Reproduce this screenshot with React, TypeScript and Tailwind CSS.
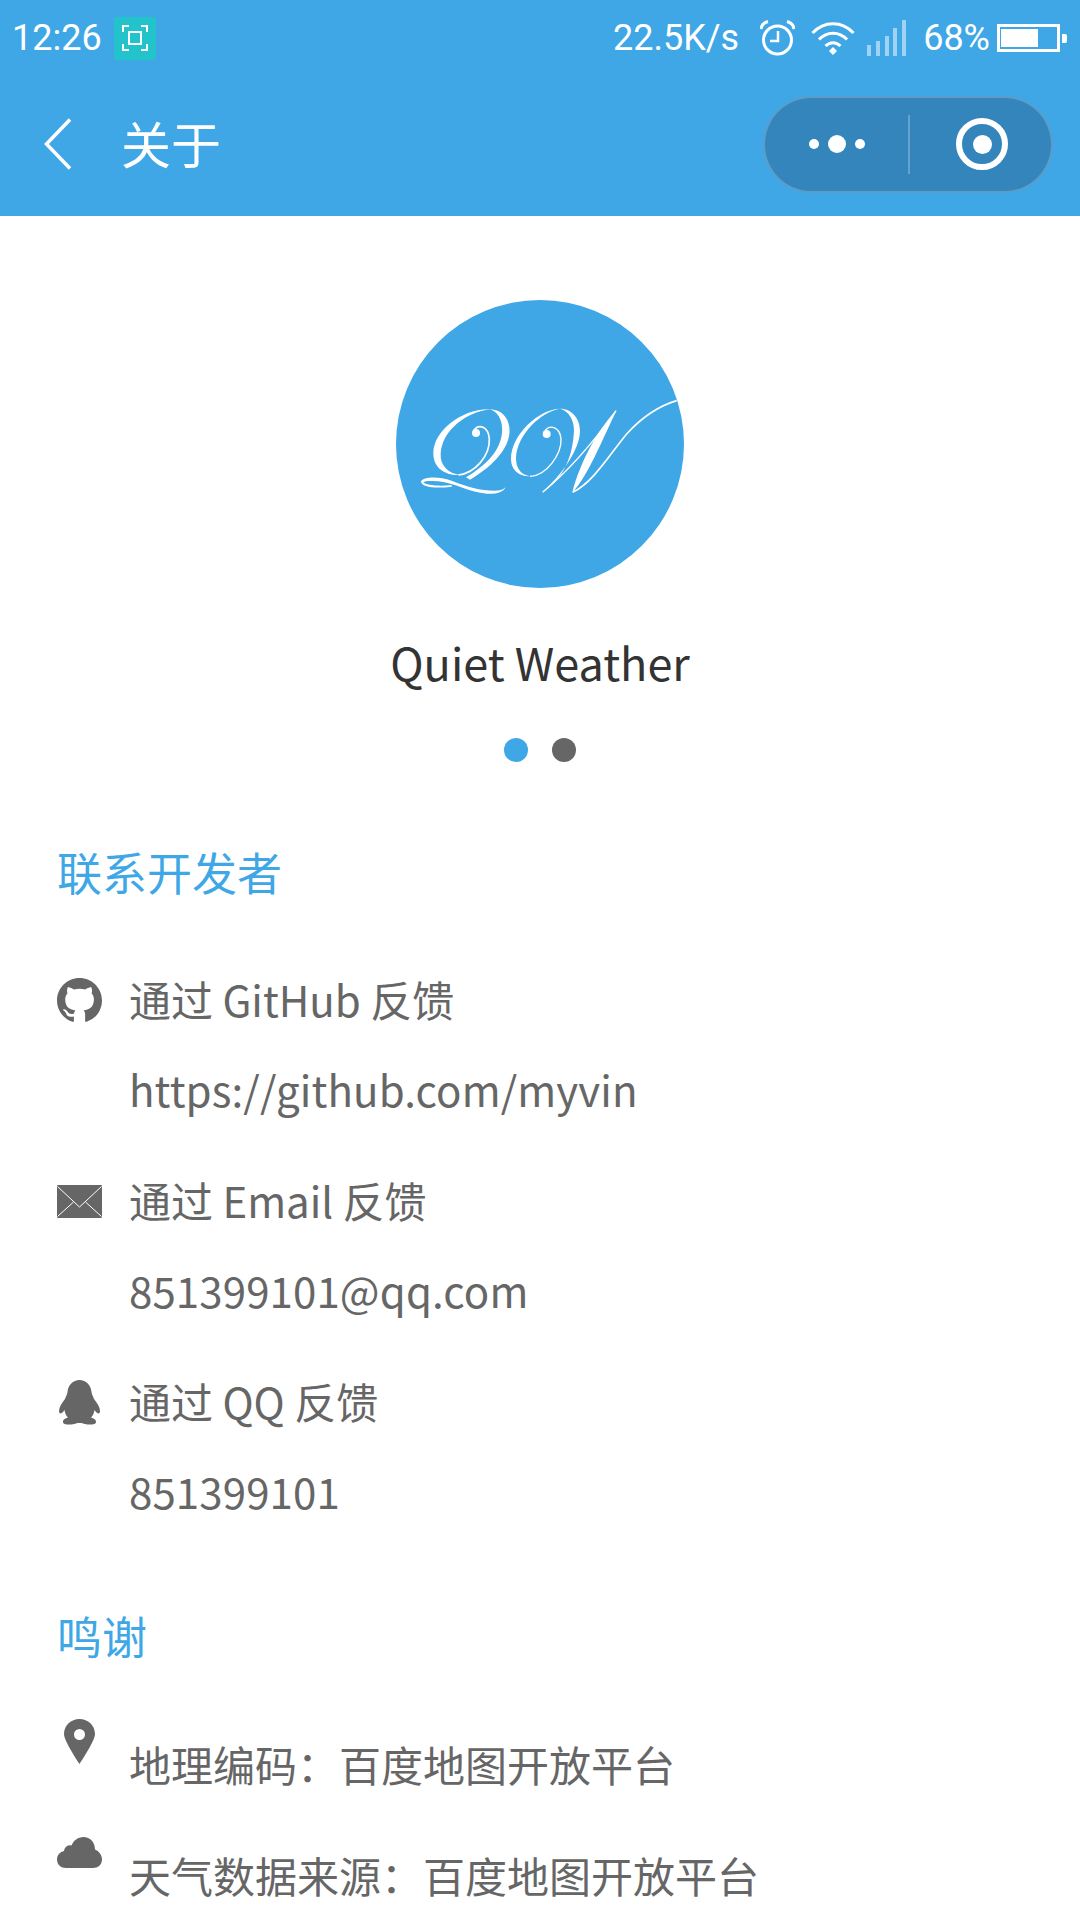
const CJK = "font-['Noto_Sans_CJK_SC','Noto_Sans',sans-serif]";

const QwLogo = () => (
  <svg viewBox="48 28 864 864" className="h-[288px] w-[288px]">
    <circle cx="480" cy="460" r="432" fill="#40a7e7" />
    <g fill="#fff">
      {/* Q */}
      <path d="M335 356C250 350 158 420 160 490C161 532 195 555 240 553C205 548 180 525 182 490C185 420 260 362 335 356Z" />
      <path d="M330 356C375 358 392 395 388 430C382 482 330 532 270 567L258 560C318 525 362 480 366 425C369 390 355 365 330 356Z" />
      <circle cx="288" cy="427" r="12" />
      <path d="M123 572C130 558 175 556 215 570C260 588 300 600 345 600C360 600 372 596 377 589C370 606 345 611 320 609C270 606 225 577 175 572C150 570 136 570 130 575C137 584 180 588 215 583L215 588C170 594 123 591 123 572Z" />
      {/* W */}
      <circle cx="500" cy="430" r="12" />
      <path d="M540 354C480 354 393 430 393 505C393 537 415 558 450 557C420 552 407 530 408 500C412 430 485 362 540 354Z" />
      <path d="M540 354C577 354 600 385 600 420C600 475 545 555 484 606C550 565 578 500 582 420C582 385 565 360 540 354Z" />
      <path d="M710 359C665 400 600 510 577 606C625 555 665 450 710 359Z" />
    </g>
    <g fill="none" stroke="#fff">
      <path d="M282 418C295 400 325 405 328 445C330 495 285 548 235 553" strokeWidth="5" />
      <path d="M495 420C510 400 540 410 543 445C545 490 500 555 450 557" strokeWidth="4" />
      <path d="M488 605C560 545 630 470 708 360" strokeWidth="4" />
      <path d="M578 605C640 575 690 490 740 430C790 375 840 345 890 330" strokeWidth="5" />
    </g>
  </svg>
);

const GithubIcon = () => (
  <svg viewBox="0 0 16 16" className="h-[45px] w-[45px]" fill="#666">
    <path d="M8 0C3.58 0 0 3.58 0 8c0 3.54 2.29 6.53 5.47 7.59.4.07.55-.17.55-.38 0-.19-.01-.82-.01-1.49-2.01.37-2.53-.49-2.69-.94-.09-.23-.48-.94-.82-1.13-.28-.15-.68-.52-.01-.53.63-.01 1.08.58 1.23.82.72 1.21 1.87.87 2.33.66.07-.52.28-.87.51-1.07-1.78-.2-3.64-.89-3.64-3.95 0-.87.31-1.59.82-2.15-.08-.2-.36-1.02.08-2.12 0 0 .67-.21 2.2.82.64-.18 1.32-.27 2-.27.68 0 1.36.09 2 .27 1.53-1.04 2.2-.82 2.2-.82.44 1.1.16 1.92.08 2.12.51.56.82 1.27.82 2.15 0 3.07-1.87 3.75-3.65 3.95.29.25.54.73.54 1.48 0 1.07-.01 1.93-.01 2.2 0 .21.15.46.55.38A8.013 8.013 0 0016 8c0-4.42-3.58-8-8-8z" />
  </svg>
);

const MailIcon = () => (
  <svg viewBox="0 0 45 33" className="h-[33px] w-[45px]">
    <rect width="45" height="33" rx="1" fill="#666" />
    <path d="M0.5 1.5L22.5 22L44.5 1.5M0.5 31.5L16.5 17M44.5 31.5L28.5 17" fill="none" stroke="#fff" strokeWidth="1" />
  </svg>
);

const PenguinIcon = () => (
  <svg viewBox="0 0 41 45" className="h-[45px] w-[41px]" fill="#666">
    <path d="M20.5 0C27 0 32 5 32.5 12C33 15 34 16 35 19C38 23 41 27 41 31C41 34 39 34 37 32L35.5 30C35 33 34 36 32 37.5C36 39 37 40 37 42C37 45 30 45 26 44C24 43.5 23 43 20.5 43C18 43 17 43.5 15 44C11 45 4 45 4 42C4 40 5 39 9 37.5C7 36 6 33 5.5 30L4 32C2 34 0 34 0 31C0 27 3 23 6 19C7 16 8 15 8.5 12C9 5 14 0 20.5 0Z" />
  </svg>
);

const PinIcon = () => (
  <svg viewBox="0 0 31 45" className="h-[45px] w-[31px]">
    <path fillRule="evenodd" fill="#666" d="M15.5 0C24 0 31 6.5 31 15C31 21 20 38 15.5 45C11 38 0 21 0 15C0 6.5 7 0 15.5 0ZM15.5 10A5.5 5.5 0 1 0 15.5 21A5.5 5.5 0 1 0 15.5 10Z" />
  </svg>
);

const CloudIcon = () => (
  <svg viewBox="0 0 45 31" className="h-[31px] w-[45px]" fill="#666">
    <path d="M9 31C4 31 0 27.5 0 22.5C0 18 3 15 7 14C7.500 10 11 7.500 14.500 8.500C16.500 3.500 21 0 26.500 0C33 0 38 5 38 12.500C42 14 45 18 45 22.500C45 27.500 41 31 36 31Z" />
  </svg>
);

const AlarmIcon = () => (
  <svg viewBox="0 0 35 36" className="h-[36px] w-[35px]" fill="none" stroke="#fff" strokeWidth="3">
    <circle cx="17.500" cy="20" r="14" />
    <path d="M18 11V21H10" strokeWidth="2.500" />
    <path d="M1 9C1.500 5 4 2.500 8 1.500M34 9C33.500 5 31 2.500 27 1.500" />
  </svg>
);

const WifiIcon = () => (
  <svg viewBox="0 0 44 34" className="h-[34px] w-[44px]" fill="none" stroke="#fff" strokeWidth="3">
    <path d="M1.500 12C13 -0.500 31 -0.500 42.500 12" />
    <path d="M8 18.500C16 10 28 10 36 18.500" />
    <path d="M14.500 25C19 20.500 25 20.500 29.500 25" />
    <path d="M18 30L22 26L26 30L22 34Z" fill="#fff" stroke="none" />
  </svg>
);

const SignalIcon = () => (
  <div className="flex h-[36px] w-[39px] items-end justify-between opacity-50">
    {[11, 15, 20, 28, 36].map((h) => (
      <div key={h} className="w-[4px] bg-white" style={{ height: h }} />
    ))}
  </div>
);

const BatteryIcon = () => (
  <div className="flex items-center">
    <div className="flex h-[28px] w-[63px] items-center border-[3px] border-white px-[1px]">
      <div className="h-[18px] w-[37px] bg-white" />
    </div>
    <div className="ml-[2px] h-[9px] w-[5px] rounded-r-[2px] bg-white" />
  </div>
);

const ContactRow = ({ icon, label, value }: { icon: React.ReactNode; label: string; value: string }) => (
  <div className="mb-[19px]">
    <div className="flex h-[91px] items-center">
      <div className="flex w-[74px] justify-start pt-[5px]">{icon}</div>
      <p className="-ml-[2px] pt-[2px]">{label}</p>
    </div>
    <p className="h-[91px] pl-[72px] tracking-[0.12px]">{value}</p>
  </div>
);

export default function App() {
  return (
    <div className={`h-[1920px] w-[1080px] overflow-hidden bg-white ${CJK}`}>
      <header className="h-[216px] bg-[#40a7e7] text-white">
        <div className="flex h-[76px] items-center justify-between pl-[12px] pr-[13px] font-['Roboto',sans-serif] text-[36px]">
          <div className="flex items-center gap-[12px]">
            <span>12:26</span>
            <span className="flex h-[43px] w-[42px] items-center justify-center rounded-[4px] bg-[#22c3ca]">
              <svg viewBox="0 0 26 26" className="h-[26px] w-[26px]" fill="none" stroke="#fff" strokeWidth="2">
                <path d="M1 7V1H7M19 1H25V7M1 19V25H7M19 25H25V19" />
                <rect x="7" y="7" width="12" height="12" />
              </svg>
            </span>
          </div>
          <div className="flex items-center">
            <span>22.5K/s</span>
            <span className="ml-[21px]"><AlarmIcon /></span>
            <span className="ml-[16px]"><WifiIcon /></span>
            <span className="ml-[12px]"><SignalIcon /></span>
            <span className="ml-[17px]">68%</span>
            <span className="ml-[7px]"><BatteryIcon /></span>
          </div>
        </div>
        <div className="flex h-[136px] items-center justify-between pl-[44px] pr-[27px]">
          <div className="flex items-center">
            <svg viewBox="0 0 28 52" className="h-[52px] w-[28px]" fill="none" stroke="#fff" strokeWidth="3.500">
              <path d="M26 1.500L2.500 26L26 50.500" />
            </svg>
            <span className="mb-[4px] ml-[49px] text-[50px] leading-none">关于</span>
          </div>
          <div className="flex h-[97px] w-[290px] items-center rounded-full border-2 border-white/20 bg-[#3385bb]">
            <div className="flex w-[143px] shrink-0 items-center justify-center gap-[9px]">
              <span className="h-[10px] w-[10px] rounded-full bg-white" />
              <span className="h-[18px] w-[18px] rounded-full bg-white" />
              <span className="h-[10px] w-[10px] rounded-full bg-white" />
            </div>
            <div className="h-[59px] w-[2px] bg-white/25" />
            <div className="flex flex-1 items-center justify-center pl-[3px]">
              <span className="flex h-[52px] w-[52px] items-center justify-center rounded-full border-[6px] border-white">
                <span className="h-[19px] w-[19px] rounded-full bg-white" />
              </span>
            </div>
          </div>
        </div>
      </header>

      <main>
        <div className="flex flex-col items-center pt-[84px]">
          <QwLogo />
          <p className="mt-[43px] text-[45px] leading-[62px] text-[#333]">Quiet Weather</p>
          <div className="mt-[45px] flex gap-[24px]">
            <span className="h-[24px] w-[24px] rounded-full bg-[#40a7e7]" />
            <span className="h-[24px] w-[24px] rounded-full bg-[#666]" />
          </div>
        </div>

        <section className="px-[57px] text-[42px] leading-[91px] text-[#666]">
          <h2 className="mt-[75px] mb-[45px] text-[45px] leading-[70px] text-[#40a7e7]">联系开发者</h2>
          <ContactRow icon={<GithubIcon />} label="通过 GitHub 反馈" value="https://github.com/myvin" />
          <ContactRow icon={<MailIcon />} label="通过 Email 反馈" value="851399101@qq.com" />
          <ContactRow icon={<div className="pl-[2px]"><PenguinIcon /></div>} label="通过 QQ 反馈" value="851399101" />

          <h2 className="mt-[65px] mb-[5px] text-[45px] leading-[70px] text-[#40a7e7]">鸣谢</h2>
          <div className="flex h-[110px] items-start">
            <div className="w-[72px] pl-[7px] pt-[43px]"><PinIcon /></div>
            <p className="pt-[42px]">{"地理编码\uFF1A百度地图开放平台"}</p>
          </div>
          <div className="flex h-[110px] items-start">
            <div className="w-[72px] pt-[51px]"><CloudIcon /></div>
            <p className="pt-[43px]">{"天气数据来源\uFF1A百度地图开放平台"}</p>
          </div>
        </section>
      </main>
    </div>
  );
}
